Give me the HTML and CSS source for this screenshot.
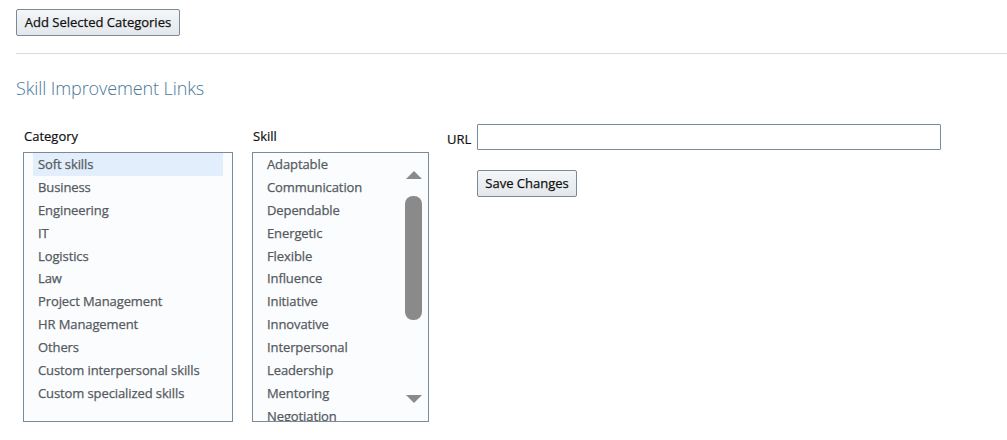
FILE: index.html
```
<!DOCTYPE html>
<html>
<head>
<meta charset="utf-8">
<link rel="stylesheet" href="styles.css">
</head>
<body>
<div class="page">
  <div class="top-actions">
    <button class="btn">Add Selected Categories</button>
  </div>
  <div class="divider"></div>
  <h2 class="section-title">Skill Improvement Links</h2>
  <div class="form-row">
    <div class="col col-category">
      <div class="col-label">Category</div>
      <div class="listbox listbox-category">
        <div class="item selected">Soft skills</div>
        <div class="item">Business</div>
        <div class="item">Engineering</div>
        <div class="item">IT</div>
        <div class="item">Logistics</div>
        <div class="item">Law</div>
        <div class="item">Project Management</div>
        <div class="item">HR Management</div>
        <div class="item">Others</div>
        <div class="item">Custom interpersonal skills</div>
        <div class="item">Custom specialized skills</div>
      </div>
    </div>
    <div class="col col-skill">
      <div class="col-label">Skill</div>
      <div class="listbox listbox-skill">
        <div class="items">
          <div class="item">Adaptable</div>
          <div class="item">Communication</div>
          <div class="item">Dependable</div>
          <div class="item">Energetic</div>
          <div class="item">Flexible</div>
          <div class="item">Influence</div>
          <div class="item">Initiative</div>
          <div class="item">Innovative</div>
          <div class="item">Interpersonal</div>
          <div class="item">Leadership</div>
          <div class="item">Mentoring</div>
          <div class="item">Negotiation</div>
        </div>
        <div class="scrollbar">
          <div class="arrow arrow-up"></div>
          <div class="thumb"></div>
          <div class="track-rest"></div>
          <div class="arrow arrow-down"></div>
        </div>
      </div>
    </div>
    <div class="col col-url">
      <div class="url-row">
        <label class="url-label" for="url">URL</label>
        <input class="url-input" id="url" type="text">
      </div>
      <div class="save-row">
        <button class="btn">Save Changes</button>
      </div>
    </div>
  </div>
</div>
</body>
</html>
```
FILE: styles.css
```
html, body {
  margin: 0;
  padding: 0;
  background: #ffffff;
}
body {
  font-family: "Open Sans", "Noto Sans", "Liberation Sans", sans-serif;
  font-size: 13px;
  color: #111111;
}
.page {
  padding: 9px 0 0 16px;
}
.top-actions {
  display: flex;
}
.btn {
  font-family: inherit;
  font-size: 13px;
  color: #111;
  height: 27px;
  padding: 0 6px;
  border: 1px solid #7b8a98;
  border-radius: 2px;
  background: linear-gradient(#f4f6f8, #e3e7eb);
  line-height: 25px;
  white-space: nowrap;
  cursor: pointer;
  -webkit-text-stroke: 0.25px #111;
}
.top-actions .btn {
  width: 164px;
}
.divider {
  margin-top: 17px;
  height: 1px;
  background: #d3dde5;
}
.section-title {
  margin: 22px 0 0 0;
  font-size: 18px;
  font-weight: 300;
  line-height: 24px;
  color: #4a7898;
  letter-spacing: -0.1px;
}
.form-row {
  display: flex;
  margin-top: 24px;
  padding-left: 7px;
}
.col-category {
  width: 210px;
  padding-top: 3px;
}
.col-skill {
  width: 177px;
  margin-left: 19px;
  padding-top: 3px;
}
.col-url {
  margin-left: 18px;
}
.col-label {
  line-height: 18px;
  height: 18px;
  margin-bottom: 7px;
  padding-left: 1px;
  -webkit-text-stroke: 0.2px #111;
}
.listbox {
  box-sizing: border-box;
  height: 270px;
  border: 1px solid #7b8a98;
  background: #fafcfe;
  overflow: hidden;
}
.listbox-category {
  padding: 0 9px;
}
.item {
  height: 22.9px;
  line-height: 22px;
  padding-left: 5px;
  color: #555a60;
  white-space: nowrap;
  letter-spacing: -0.1px;
  -webkit-text-stroke: 0.25px #555a60;
}
.item.selected {
  background: #e2eefb;
}
.listbox-skill {
  display: flex;
  padding-left: 9px;
}
.listbox-skill .items {
  flex: 1;
}
.scrollbar {
  width: 17px;
  margin-right: 6px;
  display: flex;
  flex-direction: column;
  align-items: center;
  padding-top: 18px;
  padding-bottom: 18px;
}
.arrow {
  width: 0;
  height: 0;
  border-left: 8px solid transparent;
  border-right: 8px solid transparent;
}
.arrow-up {
  border-bottom: 8px solid #8a8a8a;
}
.arrow-down {
  border-top: 8px solid #8a8a8a;
}
.thumb {
  margin-top: 17px;
  width: 17px;
  height: 124px;
  border-radius: 8px;
  background: #8a8a8a;
}
.track-rest {
  flex: 1;
}
.url-row {
  display: flex;
  align-items: center;
}
.url-label {
  width: 30px;
  line-height: 18px;
  padding-top: 3px;
  -webkit-text-stroke: 0.2px #111;
}
.url-input {
  box-sizing: border-box;
  width: 464px;
  height: 26px;
  border: 1px solid #7b8a98;
  border-radius: 1px;
  background: #fff;
  margin: 0;
}
.save-row {
  margin-top: 20px;
  padding-left: 30px;
}
.save-row .btn {
  width: 100px;
  padding: 0;
}
```
